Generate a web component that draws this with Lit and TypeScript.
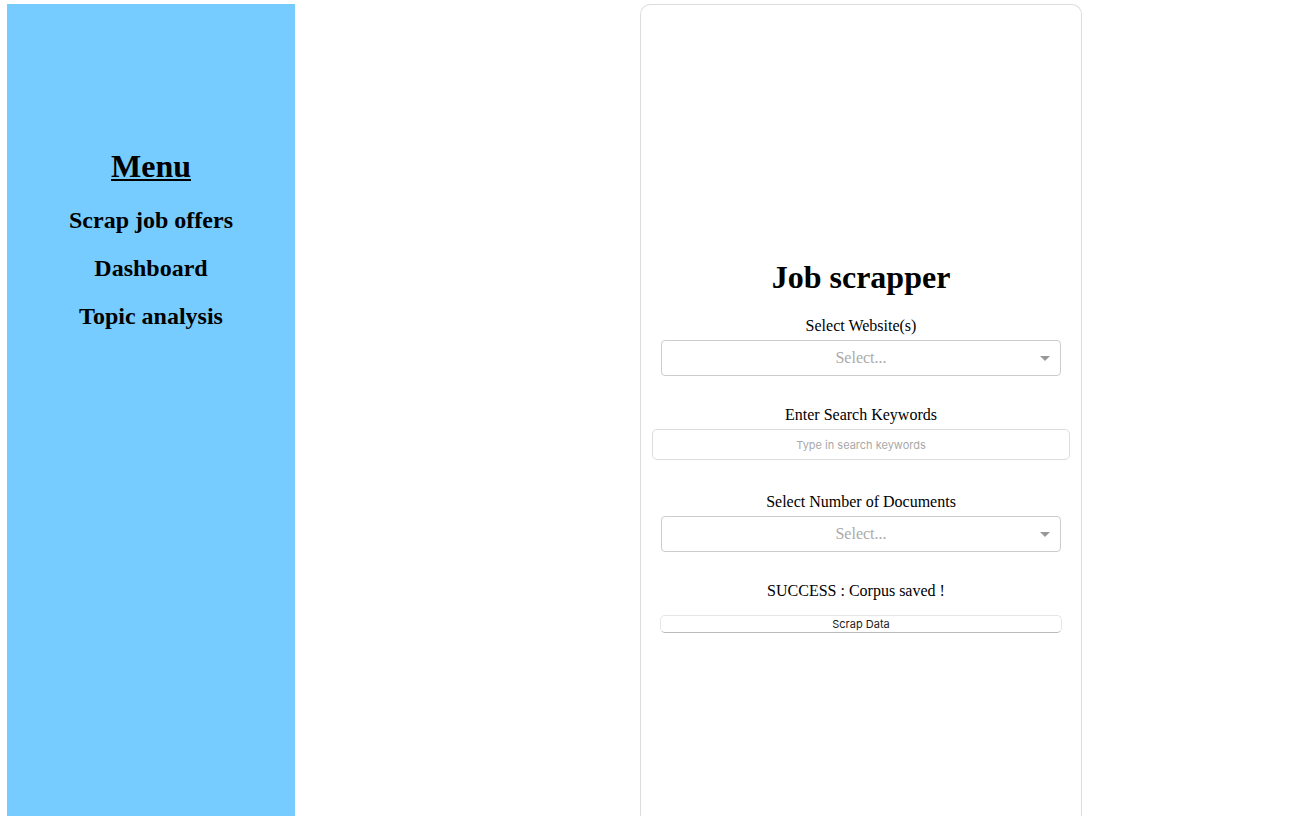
import { LitElement, html, css } from "lit";
import { customElement, property } from "lit/decorators.js";

@customElement("side-menu")
export class SideMenu extends LitElement {
  static styles = css`
    :host {
      display: block;
      box-sizing: border-box;
      padding: 144px 16px 0;
      background: #77ccff;
      text-align: center;
    }
    .title {
      margin: 0 0 22px;
      font-size: 32px;
      line-height: 37px;
      text-decoration: underline;
      text-decoration-thickness: 2px;
      text-underline-offset: 2px;
    }
    .links {
      display: flex;
      flex-direction: column;
      align-items: center;
      gap: 21px;
    }
    .link {
      color: #000;
      font-size: 24px;
      font-weight: bold;
      line-height: 27px;
      text-decoration: none;
    }
  `;

  render() {
    return html`
      <h1 class="title">Menu</h1>
      <nav class="links">
        <a class="link" href="#scrap">Scrap job offers</a>
        <a class="link" href="#dashboard">Dashboard</a>
        <a class="link" href="#topics">Topic analysis</a>
      </nav>
    `;
  }
}

@customElement("select-field")
export class SelectField extends LitElement {
  @property() label = "";

  static styles = css`
    :host {
      display: block;
    }
    .label {
      display: block;
      margin-bottom: 5px;
      line-height: 18px;
    }
    .control {
      display: grid;
      align-items: center;
    }
    .select {
      grid-area: 1 / 1;
      appearance: none;
      width: 100%;
      height: 36px;
      padding: 0 10px 2px;
      border: 1px solid #ccc;
      border-radius: 4px;
      background: #fff;
      color: #aaa;
      font: inherit;
      text-align: center;
      text-align-last: center;
    }
    .arrow {
      grid-area: 1 / 1;
      justify-self: end;
      margin-right: 11px;
      pointer-events: none;
    }
  `;

  render() {
    return html`
      <label class="label" for="choice">${this.label}</label>
      <div class="control">
        <select class="select" id="choice">
          <option>Select...</option>
        </select>
        <svg class="arrow" width="10" height="6" viewBox="0 0 10 6" aria-hidden="true">
          <path d="M0 1h10l-5 5z" fill="#999" />
        </svg>
      </div>
    `;
  }
}

@customElement("app-root")
export class AppRoot extends LitElement {
  static styles = css`
    :host {
      display: grid;
      grid-template-columns: 288px 1fr;
      box-sizing: border-box;
      min-height: 100vh;
      padding: 4px 8px 0 7px;
      background: #fff;
      color: #000;
      font-family: "Liberation Serif", "Times New Roman", serif;
      font-size: 16px;
    }
    .main {
      display: flex;
      justify-content: center;
      padding-left: 135px;
    }
    .panel {
      box-sizing: border-box;
      width: 100%;
      max-width: 442px;
      padding: 254px 11px 0;
      border: 1px solid #ddd;
      border-bottom: none;
      border-radius: 10px 10px 0 0;
      text-align: center;
    }
    .heading {
      margin: 0 0 21px;
      font-size: 32px;
      line-height: 37px;
    }
    .form {
      display: flex;
      flex-direction: column;
    }
    .inset {
      margin: 0 9px;
    }
    .keywords {
      margin: 30px 0 33px;
    }
    .label {
      display: block;
      margin-bottom: 5px;
      line-height: 18px;
    }
    .input {
      box-sizing: border-box;
      display: block;
      width: 100%;
      height: 31px;
      padding: 0 8px;
      border: 1px solid #ddd;
      border-radius: 5px;
      background: #fff;
      font: 11px Inter, sans-serif;
      text-align: center;
    }
    .input::placeholder {
      color: #a9a9a9;
      opacity: 1;
    }
    .status {
      margin: 30px 0 15px;
      padding-right: 10px;
      line-height: 18px;
    }
    .submit {
      height: 18px;
      margin: 0 8px;
      padding: 0;
      border: 1px solid #e6e6e6;
      border-bottom-color: #bbb;
      border-radius: 5px;
      background: #fff;
      color: #222;
      font: 11px Inter, sans-serif;
    }
  `;

  render() {
    return html`
      <side-menu></side-menu>
      <main class="main">
        <section class="panel">
          <h1 class="heading">Job scrapper</h1>
          <form class="form" @submit=${(e: Event) => e.preventDefault()}>
            <select-field class="inset" label="Select Website(s)"></select-field>
            <div class="keywords">
              <label class="label" for="keywords">Enter Search Keywords</label>
              <input class="input" id="keywords" type="text" placeholder="Type in search keywords" />
            </div>
            <select-field class="inset" label="Select Number of Documents"></select-field>
            <p class="status">SUCCESS : Corpus saved !</p>
            <button class="submit" type="submit">Scrap Data</button>
          </form>
        </section>
      </main>
    `;
  }
}
